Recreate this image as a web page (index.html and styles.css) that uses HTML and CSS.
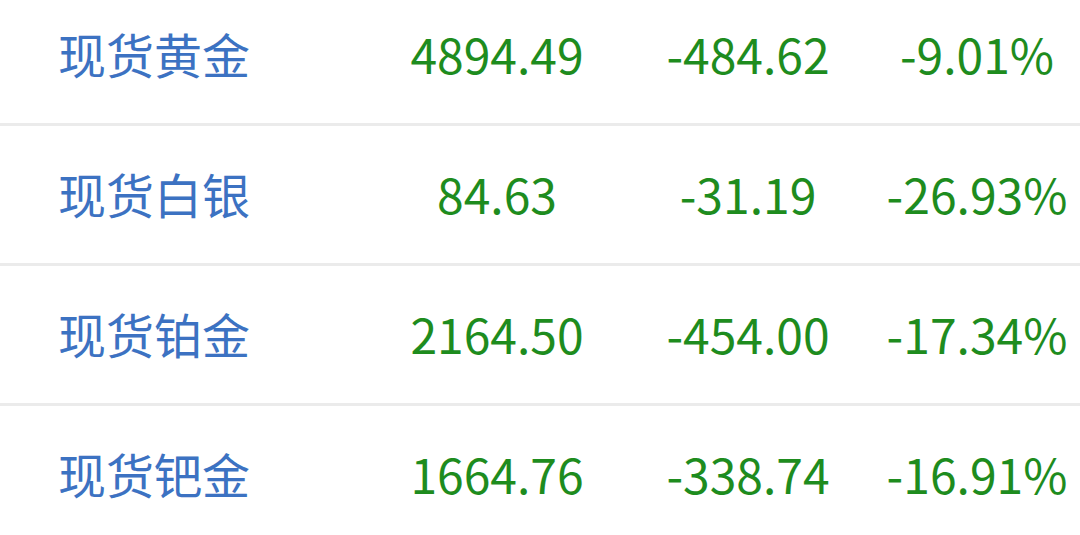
FILE: index.html
```html
<!DOCTYPE html>
<html lang="zh">
<head>
<meta charset="utf-8">
<link rel="stylesheet" href="styles.css">
</head>
<body>
<div class="table">
  <div class="row">
    <div class="name">现货黄金</div>
    <div class="price">4894.49</div>
    <div class="chg">-484.62</div>
    <div class="pct">-9.01%</div>
  </div>
  <div class="row">
    <div class="name">现货白银</div>
    <div class="price">84.63</div>
    <div class="chg">-31.19</div>
    <div class="pct">-26.93%</div>
  </div>
  <div class="row">
    <div class="name">现货铂金</div>
    <div class="price">2164.50</div>
    <div class="chg">-454.00</div>
    <div class="pct">-17.34%</div>
  </div>
  <div class="row">
    <div class="name">现货钯金</div>
    <div class="price">1664.76</div>
    <div class="chg">-338.74</div>
    <div class="pct">-16.91%</div>
  </div>
</div>
</body>
</html>
```
FILE: styles.css
```css
html, body {
  margin: 0;
  padding: 0;
  background: #ffffff;
  overflow: hidden;
}
body {
  font-family: "Noto Sans CJK SC", "Noto Sans", sans-serif;
  font-size: 48px;
}
.table {
  margin-top: -14px;
}
.row {
  display: flex;
  align-items: center;
  box-sizing: content-box;
  height: 134px;
  padding: 0 0 3px 58px;
  border-bottom: 3px solid #ebebeb;
}
.name {
  width: 192px;
  color: #3c72c2;
  white-space: nowrap;
}
.price, .chg, .pct {
  color: #1e8c1e;
  text-align: center;
  white-space: nowrap;
}
.price {
  width: 300px;
  margin-left: 97px;
}
.chg {
  width: 198px;
  margin-left: 2px;
}
.pct {
  width: 206px;
  margin-left: 27px;
}
```
